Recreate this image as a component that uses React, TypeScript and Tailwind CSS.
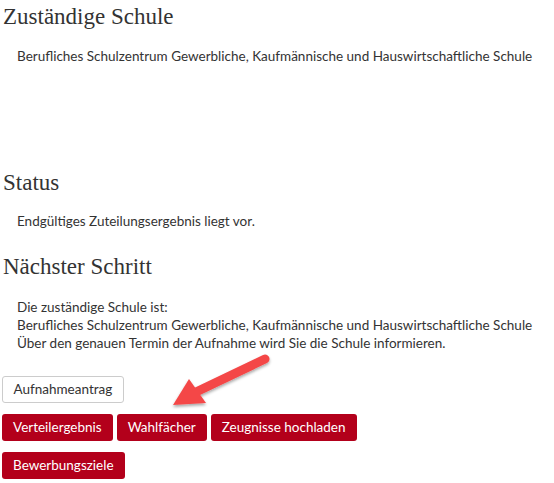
const headingClass =
  "h-[34px] flex items-center pl-[3px] text-[23px] text-[#333] font-['Liberation_Serif',serif]";
const redBtn =
  "h-[27px] px-[11px] rounded-[3px] bg-[#b3001b] text-white text-[13.5px] leading-none flex items-center";

const App = () => {
  return (
    <div className="relative w-[554px] h-[483px] bg-white overflow-hidden font-['Lato',sans-serif] text-[13.5px] text-[#333]">
      <h2 className={headingClass}>Zuständige Schule</h2>
      <p className="pl-[17px] mt-[12px] h-[20px] leading-[20px]">
        Berufliches Schulzentrum Gewerbliche, Kaufmännische und Hauswirtschaftliche Schule
      </p>

      <h2 className={headingClass + " mt-[100px]"}>Status</h2>
      <p className="pl-[17px] mt-[11px] h-[20px] leading-[20px]">
        Endgültiges Zuteilungsergebnis liegt vor.
      </p>

      <h2 className={headingClass + " mt-[19px]"}>Nächster Schritt</h2>
      <div className="pl-[17px] mt-[14px] leading-[18px]">
        <p>Die zuständige Schule ist:</p>
        <p>Berufliches Schulzentrum Gewerbliche, Kaufmännische und Hauswirtschaftliche Schule</p>
        <p>Über den genauen Termin der Aufnahme wird Sie die Schule informieren.</p>
      </div>

      <div className="pl-[2px] mt-[24px] flex flex-col gap-[11px]">
        <div className="flex">
          <button className="h-[27px] px-[10.5px] rounded-[3px] border border-[#ccc] bg-white text-[#333] text-[13.5px] leading-none">
            Aufnahmeantrag
          </button>
        </div>
        <div className="flex gap-[4px]">
          <button className={redBtn}>Verteilergebnis</button>
          <button className={redBtn}>Wahlfächer</button>
          <button className={redBtn}>Zeugnisse hochladen</button>
        </div>
        <div className="flex">
          <button className={redBtn}>Bewerbungsziele</button>
        </div>
      </div>

      {/* annotation arrow */}
      <svg
        className="absolute left-0 top-0 pointer-events-none"
        width="554"
        height="483"
        viewBox="0 0 554 483"
      >
        <defs>
          <filter id="sh" x="-20%" y="-20%" width="140%" height="140%">
            <feDropShadow dx="0" dy="2" stdDeviation="1.5" floodColor="#000" floodOpacity="0.35" />
          </filter>
        </defs>
        <g filter="url(#sh)">
          <line x1="265" y1="359" x2="196" y2="392" stroke="#f44747" strokeWidth="9" strokeLinecap="round" />
          <polygon points="173,405 189,379 206,403" fill="#f44747" />
        </g>
      </svg>
    </div>
  );
};

export default App;
